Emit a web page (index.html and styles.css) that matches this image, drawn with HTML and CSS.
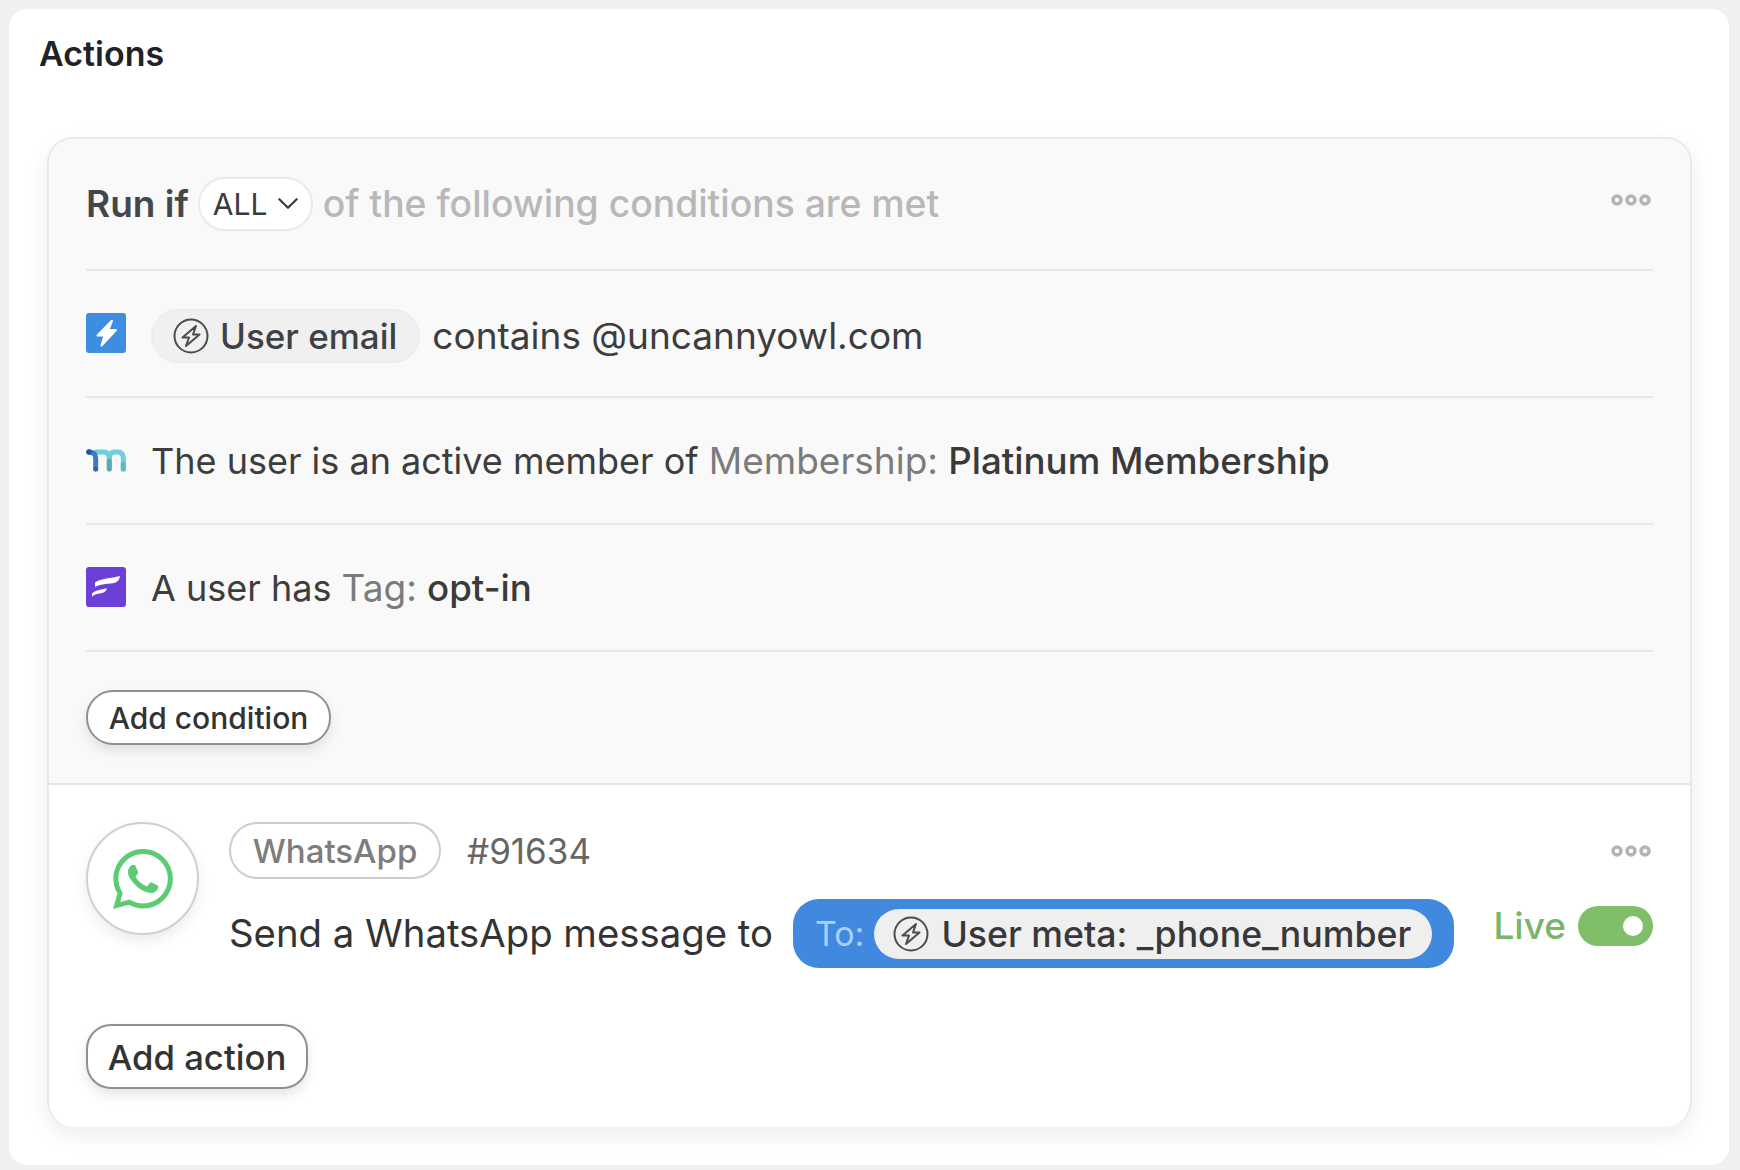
FILE: index.html
```html
<!DOCTYPE html>
<html lang="en">
<head>
<meta charset="utf-8">
<title>Actions</title>
<link rel="stylesheet" href="styles.css">
</head>
<body>
<main class="card">
  <h2 class="title">Actions</h2>
  <section class="box">
    <div class="conditions">
      <div class="row head-row">
        <span class="run">Run if</span>
        <span class="select">ALL
          <svg class="chev" viewBox="0 0 20 12" fill="none" stroke="#3a3a3a" stroke-width="2" stroke-linecap="round" stroke-linejoin="round"><path d="M2 2l8 8 8-8"/></svg>
        </span>
        <span class="light">of the following conditions are met</span>
        <svg class="dots dots-head" viewBox="0 0 40 12" fill="none" stroke="#b4b4b4" stroke-width="3.500"><circle cx="6" cy="6" r="4"/><circle cx="20" cy="6" r="4"/><circle cx="34" cy="6" r="4"/></svg>
      </div>
      <div class="row row-email">
        <svg class="logo" viewBox="0 0 40 40"><rect width="40" height="40" rx="3" fill="#3f8de0"/><path d="M25.500 8 11.500 22.500h7l-3 10 14.500-15.500h-7.500l3.500-9z" fill="#fff" stroke="#fff" stroke-width="2" stroke-linejoin="round"/></svg>
        <span class="token">
          <svg class="bolt" viewBox="0 0 36 36" fill="none" stroke="#4c4c4c" stroke-width="2"><circle cx="18" cy="18" r="16.500"/><path d="M23 8 9.500 19.500H16L13 28l13.500-11.500H20z" stroke-linejoin="round"/></svg>
          User email
        </span>
        <span class="text text-email">contains @uncannyowl.com</span>
      </div>
      <div class="row">
        <svg class="logo" viewBox="0 0 40 40" fill="none" stroke-width="5" stroke-linecap="round">
          <path d="M23.300 18c0-4 2-6 6-6h2c4 0 6 2 6 6v11" stroke="#6fd0d8"/>
          <path d="M23.300 29V18c0-4-2-6-6-6h-7" stroke="#6fd0d8"/>
          <path d="M23.300 21v8" stroke="#5aa9b5"/>
          <path d="M37.300 24v5" stroke="#5fb8c2"/>
          <path d="M3 12c4 0 6.700 2 6.700 6v11" stroke="#3c7fc0"/>
          <circle cx="3" cy="12" r="2.800" fill="#2456a8" stroke="none"/>
          <circle cx="9.700" cy="29" r="2.400" fill="#2f5fae" stroke="none"/>
        </svg>
        <span class="text">The user is an active member of <span class="muted">Membership:</span> <span class="value">Platinum Membership</span></span>
      </div>
      <div class="row">
        <svg class="logo" viewBox="0 0 40 40"><rect width="40" height="40" rx="3" fill="#6d3fd9"/><path d="M9 15.500C15 11 25 11.500 34 9c-.8 3.600-2 6-5 6.700-6 1.300-13 .6-20 4.300z" fill="#fff"/><path d="M6 26.500c3-3.500 9-3.800 15-5.300-.8 2.800-2.600 4.400-5.600 5-3 .6-6.400.4-9.400 3.600z" fill="#fff"/></svg>
        <span class="text">A user has <span class="muted">Tag:</span> <span class="value">opt-in</span></span>
      </div>
      <div class="add-row"><button class="btn btn-small">Add condition</button></div>
    </div>
    <div class="action">
      <div class="action-main">
        <div class="circle">
          <svg class="wa" viewBox="0 0 24 24"><path fill="#5ccb72" d="M17.472 14.382c-.297-.149-1.758-.867-2.03-.967-.273-.099-.471-.148-.67.15-.197.297-.767.966-.94 1.164-.173.199-.347.223-.644.075-.297-.15-1.255-.463-2.39-1.475-.883-.788-1.48-1.761-1.653-2.059-.173-.297-.018-.458.13-.606.134-.133.298-.347.446-.52.149-.174.198-.298.298-.497.099-.198.05-.371-.025-.52-.075-.149-.669-1.612-.916-2.207-.242-.579-.487-.5-.669-.51-.173-.008-.371-.01-.57-.01-.198 0-.52.074-.792.372-.272.297-1.04 1.016-1.04 2.479 0 1.462 1.065 2.875 1.213 3.074.149.198 2.096 3.2 5.077 4.487.709.306 1.262.489 1.694.625.712.227 1.36.195 1.871.118.571-.085 1.758-.719 2.006-1.413.248-.694.248-1.289.173-1.413-.074-.124-.272-.198-.57-.347m-5.421 7.403h-.004a9.87 9.87 0 01-5.031-1.378l-.361-.214-3.741.982.998-3.648-.235-.374a9.86 9.86 0 01-1.51-5.26c.001-5.45 4.436-9.884 9.888-9.884 2.64 0 5.122 1.03 6.988 2.898a9.825 9.825 0 012.893 6.994c-.003 5.45-4.437 9.884-9.885 9.884m8.413-18.297A11.815 11.815 0 0012.05 0C5.495 0 .16 5.335.157 11.892c0 2.096.547 4.142 1.588 5.945L.057 24l6.305-1.654a11.882 11.882 0 005.683 1.448h.005c6.554 0 11.89-5.335 11.893-11.893a11.821 11.821 0 00-3.48-8.413z"/></svg>
        </div>
        <div class="action-body">
          <div class="meta">
            <span class="app-pill">WhatsApp</span>
            <span class="id">#91634</span>
            <svg class="dots" viewBox="0 0 40 12" fill="none" stroke="#b4b4b4" stroke-width="3.500"><circle cx="6" cy="6" r="4"/><circle cx="20" cy="6" r="4"/><circle cx="34" cy="6" r="4"/></svg>
          </div>
          <div class="sentence">
            <span class="send">Send a WhatsApp message to</span>
            <span class="to">
              <span class="to-label">To:</span>
              <span class="to-token">
                <svg class="bolt" viewBox="0 0 36 36" fill="none" stroke="#4c4c4c" stroke-width="2"><circle cx="18" cy="18" r="16.500"/><path d="M23 8 9.500 19.500H16L13 28l13.500-11.500H20z" stroke-linejoin="round"/></svg>
                User meta: _phone_number
              </span>
            </span>
            <span class="status">
              <span class="live">Live</span>
              <span class="toggle"><span class="knob"></span></span>
            </span>
          </div>
        </div>
      </div>
      <button class="btn btn-large">Add action</button>
    </div>
  </section>
</main>
</body>
</html>
```
FILE: styles.css
```css
* { box-sizing: border-box; }
html, body { margin: 0; height: 100%; }
body {
  background: #f0f0f0;
  font-family: Inter, "Liberation Sans", sans-serif;
  color: #3a3a3a;
  padding: 9px 11px 5px 9px;
  overflow: hidden;
}
.card {
  background: #fff;
  height: 1156px;
  border-radius: 18px;
  padding: 0 37px 0 38px;
}
.title {
  margin: 0 0 0 -8px;
  height: 128px;
  padding-top: 25px;
  font-size: 34px;
  line-height: 40px;
  font-weight: 600;
  color: #1f2226;
}
.box {
  border: 2px solid #e9e9e9;
  border-bottom: 0;
  border-radius: 26px;
  box-shadow: 0 8px 22px rgba(0, 0, 0, .08);
  background: #fff;
  overflow: hidden;
}
.conditions {
  background: #f9f9f9;
  border-bottom: 2px solid #e6e6e6;
  padding: 0 37px;
}
.row {
  display: flex;
  align-items: center;
  height: 127px;
  border-bottom: 2px solid #e8e8e8;
  font-size: 36px;
}
.head-row { height: 132px; padding-bottom: 1px; gap: 10px; font-size: 37.300px; }
.run { font-weight: 600; color: #43464a; font-size: 37px; margin-right: -1px; }
.select {
  display: inline-flex;
  align-items: center;
  gap: 10px;
  height: 54px;
  width: 115px;
  padding-left: 13px;
  border: 2px solid #e9e9e9;
  border-radius: 27px;
  background: #fff;
  font-size: 30px;
  color: #3a3a3a;
}
.chev { width: 22px; height: 13px; }
.light { color: #b8b8b8; font-weight: 500; }
.dots { width: 40px; height: 12px; margin-left: auto; margin-right: 2px; }
.dots-head { margin-bottom: 8px; }
.logo { width: 40px; height: 40px; flex: none; margin: -2px 25px 0 0; }
.row-email { padding-top: 4px; }
.row-email .logo { margin-top: -6px; }
.token {
  display: inline-flex;
  align-items: center;
  gap: 11px;
  height: 54px;
  padding: 0 21px 0 20px;
  border: 2px solid #ececec;
  border-radius: 27px;
  background: #f0f0f0;
  font-size: 35px;
  font-weight: 500;
  margin-right: 12px;
  color: #3e4145;
}
.bolt { width: 36px; height: 36px; flex: none; }
.text { color: #3d3d3d; }
.text-email { font-size: 37px; }
.muted { color: #7b7b7b; font-size: 37px; }
.value { color: #3a3a3a; font-weight: 500; font-size: 36.700px; }
.add-row { height: 131px; padding-top: 38px; }
.btn {
  font-family: inherit;
  background: #fff;
  color: #333;
  border: 2px solid #909090;
  box-shadow: 0 6px 12px rgba(0, 0, 0, .1);
  padding: 0;
}
.btn-small { width: 245px; height: 55px; border-radius: 27px; font-size: 30px; font-weight: 500; }
.btn-large { width: 222px; height: 65px; border-radius: 25px; font-size: 34.700px; font-weight: 500; }
.action { padding: 37px 37px 0; height: 342px; }
.action-main { display: flex; gap: 30px; height: 202px; }
.circle {
  width: 113px;
  height: 113px;
  flex: none;
  border: 2px solid #cfcfcf;
  border-radius: 50%;
  box-shadow: 0 6px 14px rgba(0, 0, 0, .08);
  display: flex;
  align-items: center;
  justify-content: center;
}
.wa { width: 60px; height: 60px; }
.action-body { flex: 1; min-width: 0; }
.meta { display: flex; align-items: center; gap: 26px; height: 57px; font-size: 35px; }
.app-pill {
  display: inline-flex;
  align-items: center;
  justify-content: center;
  width: 212px;
  height: 57px;
  border: 2px solid #cdcdcd;
  border-radius: 29px;
  color: #7d7d7d;
  font-size: 33px;
  font-weight: 500;
}
.id { color: #666; }
.sentence { display: flex; align-items: flex-start; margin-top: 20px; }
.send { font-size: 38.300px; color: #333; line-height: 69px; margin-right: 20px; }
.to {
  display: inline-flex;
  align-items: center;
  gap: 10px;
  width: 661px;
  height: 69px;
  padding-left: 22px;
  background: #4089df;
  border-radius: 26px;
}
.to-label { font-size: 34px; color: #a9d0fa; }
.to-token {
  display: inline-flex;
  align-items: center;
  gap: 12px;
  width: 558px;
  height: 50px;
  padding-left: 19px;
  background: #efefef;
  border-radius: 25px;
  font-size: 35.700px;
  font-weight: 500;
  color: #38383a;
}
.status { display: flex; align-items: center; gap: 12px; margin-left: auto; margin-top: 4px; }
.live { font-size: 37px; color: #79b568; font-weight: 500; }
.toggle {
  display: flex;
  align-items: center;
  justify-content: flex-end;
  width: 75px;
  height: 40px;
  padding-right: 10px;
  background: #7fbf6a;
  border-radius: 20px;
}
.knob { width: 20px; height: 20px; border-radius: 50%; background: #fff; }
```
